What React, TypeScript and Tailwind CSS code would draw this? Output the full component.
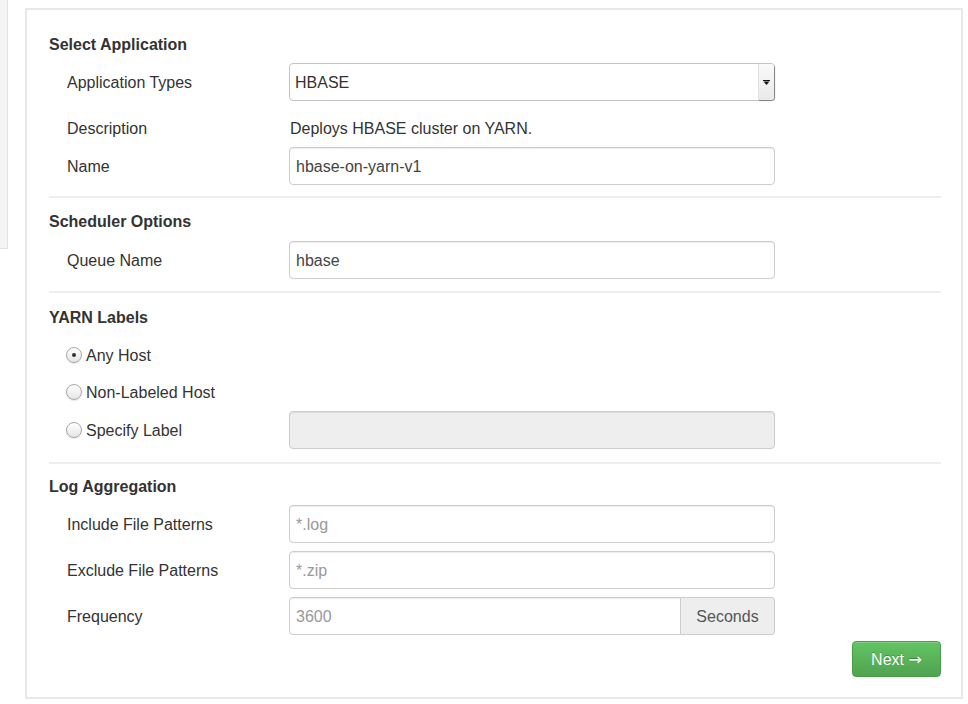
import React from 'react'

const font = { fontFamily: '"Liberation Sans", Arial, sans-serif' }

function Row({ label, children, className = '' }: { label: string; children?: React.ReactNode; className?: string }) {
  return (
    <div className={`flex items-center h-[38px] pl-[18px] ${className}`}>
      <div className="w-[222px] pt-[2px] text-[16px] text-[#333]">{label}</div>
      {children}
    </div>
  )
}

function TextInput({ value, placeholder, disabled }: { value?: string; placeholder?: string; disabled?: boolean }) {
  return (
    <div
      className={`w-[486px] h-[38px] flex items-center px-[6px] pt-[2px] border border-[#ccc] rounded-[4px] text-[16px] shadow-[inset_0_1px_1px_rgba(0,0,0,0.075)] ${
        disabled ? 'bg-[#eee]' : 'bg-white'
      }`}
    >
      {value ? <span className="text-[#444]">{value}</span> : <span className="text-[#999]">{placeholder}</span>}
    </div>
  )
}

function Radio({ label, checked }: { label: string; checked?: boolean }) {
  return (
    <div className="flex items-center w-[223px]">
      <span className="w-[16px] h-[16px] rounded-full border border-[#a8a8a8] bg-gradient-to-b from-white to-[#e6e6e6] flex items-center justify-center shadow-[0_1px_1px_rgba(0,0,0,0.1)]">
        {checked && <span className="w-[4px] h-[4px] rounded-full bg-[#333]" />}
      </span>
      <span className="ml-[4px] pt-[2px] text-[16px] text-[#333]">{label}</span>
    </div>
  )
}

function Heading({ children, className = '' }: { children: React.ReactNode; className?: string }) {
  return <div className={`h-[20px] pt-[1px] leading-[20px] text-[16px] font-bold text-[#333] ${className}`}>{children}</div>
}

export default function App() {
  return (
    <div className="flex items-start bg-white min-h-[704px]" style={font}>
      <div className="w-[8px] h-[249px] bg-[#f5f5f5] border-r border-b border-[#e3e3e3]" />

      <div className="ml-[17px] mt-[8px] w-[938px] h-[691px] border-2 border-[#e8e8e8] pl-[22px] pr-[20px] pt-[24px] flex flex-col">
        <Heading>Select Application</Heading>
        <Row label="Application Types" className="mt-[9px]">
          <div className="w-[486px] h-[38px] flex items-stretch border border-[#c4c4c4] rounded-[4px] bg-white text-[16px] text-[#333]">
            <div className="flex-1 flex items-center px-[5px] pt-[2px]">HBASE</div>
            <div className="w-[16px] flex items-center justify-center bg-gradient-to-b from-[#fafafa] to-[#e9e9e9] border-l border-[#e0e0e0] rounded-r-[3px] shadow-[1px_1px_1px_rgba(0,0,0,0.35)]">
              <svg width="7" height="5" viewBox="0 0 7 5">
                <rect x="0" y="0" width="7" height="1" fill="#111" />
                <path d="M0.5 1.5 L6.5 1.5 L3.5 5 Z" fill="#111" />
              </svg>
            </div>
          </div>
        </Row>
        <Row label="Description" className="mt-[8px]">
          <span className="pt-[2px] pl-[1px] text-[16px] text-[#333]">Deploys HBASE cluster on YARN.</span>
        </Row>
        <Row label="Name">
          <TextInput value="hbase-on-yarn-v1" />
        </Row>

        <div className="mt-[11px] border-t-2 border-[#eee]" />

        <Heading className="mt-[13px]">Scheduler Options</Heading>
        <Row label="Queue Name" className="mt-[10px]">
          <TextInput value="hbase" />
        </Row>

        <div className="mt-[12px] border-t-2 border-[#eee]" />

        <Heading className="mt-[14px]">YARN Labels</Heading>
        <div className="mt-[9px] h-[37px] flex items-center pl-[17px]">
          <Radio label="Any Host" checked />
        </div>
        <div className="h-[38px] flex items-center pl-[17px]">
          <Radio label="Non-Labeled Host" />
        </div>
        <div className="h-[38px] flex items-center pl-[17px]">
          <Radio label="Specify Label" />
          <TextInput disabled />
        </div>

        <div className="mt-[13px] border-t-2 border-[#eee]" />

        <Heading className="mt-[12px]">Log Aggregation</Heading>
        <Row label="Include File Patterns" className="mt-[9px]">
          <TextInput placeholder="*.log" />
        </Row>
        <Row label="Exclude File Patterns" className="mt-[8px]">
          <TextInput placeholder="*.zip" />
        </Row>
        <Row label="Frequency" className="mt-[8px]">
          <div className="w-[486px] h-[38px] flex text-[16px]">
            <div className="flex-1 flex items-center px-[6px] pt-[2px] border border-[#ccc] rounded-l-[4px] bg-white text-[#999] shadow-[inset_0_1px_1px_rgba(0,0,0,0.075)]">
              3600
            </div>
            <div className="w-[94px] flex items-center justify-center pt-[2px] border border-l-0 border-[#ccc] rounded-r-[4px] bg-[#eee] text-[#555]">
              Seconds
            </div>
          </div>
        </Row>

        <div className="mt-[6px] flex justify-end">
          <button className="w-[89px] h-[36px] pt-[2px] rounded-[4px] border border-[#4a9c4a] bg-gradient-to-b from-[#62c462] to-[#51a351] text-white text-[16px] shadow-[inset_0_1px_0_rgba(255,255,255,0.2),0_1px_2px_rgba(0,0,0,0.05)] [text-shadow:0_-1px_0_rgba(0,0,0,0.25)]">
            Next{' '}
            <span className="font-['DejaVu_Sans',sans-serif]">→</span>
          </button>
        </div>
      </div>
    </div>
  )
}
